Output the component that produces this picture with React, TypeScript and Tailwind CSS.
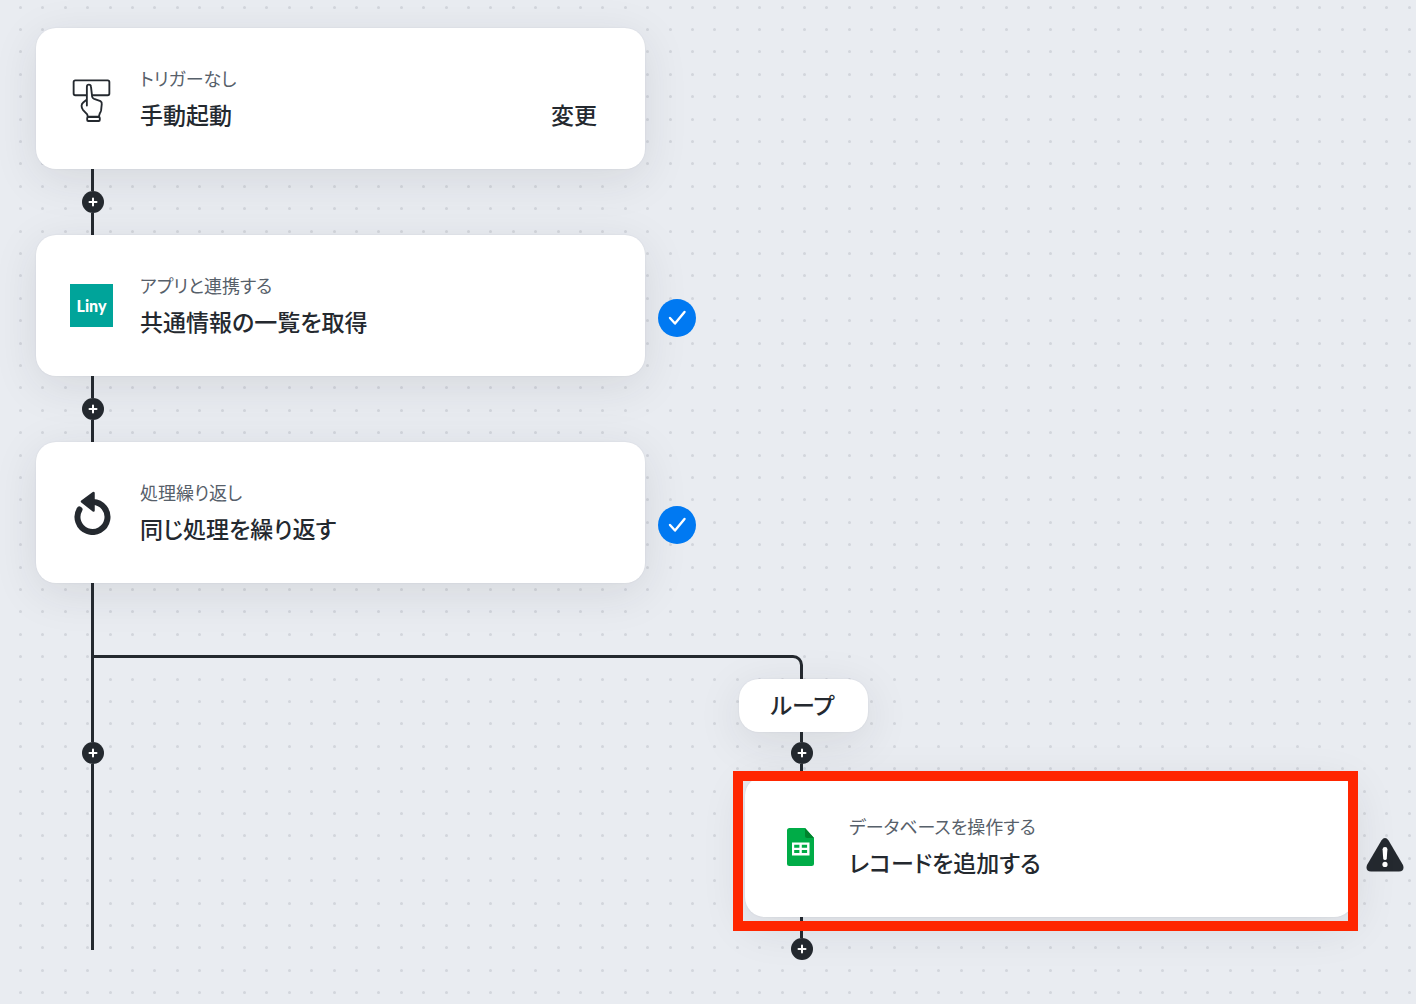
import type { ReactNode } from 'react';

type StepCardProps = {
  icon: ReactNode;
  category: string;
  title: string;
  action?: string;
};

function StepCard({ icon, category, title, action }: StepCardProps) {
  return (
    <article className="flex h-[141px] w-[609px] shrink-0 items-center rounded-[20px] bg-white pr-12 pl-8 shadow-[0_0_2px_rgba(36,41,47,0.08),0_10px_45px_rgba(36,41,47,0.1)]">
      <div className="flex w-[47px] shrink-0 justify-center">{icon}</div>
      <div className="ml-[25px] flex flex-1 flex-col gap-1 pb-0.5">
        <p className="text-[18px] leading-7 text-[#57606a]">{category}</p>
        <div className="flex justify-between text-[23px] leading-9 font-medium text-[#24292f]">
          <h2>{title}</h2>
          {action && (
            <button type="button" className="cursor-pointer">
              {action}
            </button>
          )}
        </div>
      </div>
    </article>
  );
}

function AddButton() {
  return (
    <button
      type="button"
      aria-label="ステップを追加"
      className="flex size-[22px] shrink-0 cursor-pointer items-center justify-center rounded-full bg-[#24292f]">
      <svg viewBox="0 0 10 10" className="size-[10px]" stroke="#fff" strokeWidth="2" strokeLinecap="round">
        <path d="M5 1.5v7M1.5 5h7" />
      </svg>
    </button>
  );
}

// Vertical line with an add button in the middle
function Connector() {
  return (
    <div className="flex h-[66px] w-[113px] flex-col items-center">
      <span className="w-[3px] flex-1 bg-[#24292f]" />
      <AddButton />
      <span className="w-[3px] flex-1 bg-[#24292f]" />
    </div>
  );
}

function DoneBadge() {
  return (
    <span role="img" aria-label="完了" className="mt-6 flex size-[38px] items-center justify-center rounded-full bg-[#0079f2]">
      <svg viewBox="0 0 20 16" className="h-4 w-5" fill="none" stroke="#fff" strokeWidth="2.4" strokeLinecap="round" strokeLinejoin="round">
        <path d="M3 8l5 5.5L17.5 2" />
      </svg>
    </span>
  );
}

function WarningIcon() {
  return (
    <svg role="img" aria-label="未設定" viewBox="0 0 38 36" className="mt-4 h-9 w-[38px]">
      <path d="M15.4 3.4Q19 -1.2 22.6 3.4L37 28Q39 34.4 33 34.6H5Q-1 34.4 1 28Z" fill="#24292f" />
      <path d="M16.6 12.2Q16.6 10 19 10t2.4 2.2l-.6 9.2Q20.6 23 19 23t-1.8-1.6z" fill="#fff" />
      <circle cx="19" cy="27.4" r="2.6" fill="#fff" />
    </svg>
  );
}

function PressIcon() {
  return (
    <svg viewBox="38 26 116 130" className="mt-1 h-[43px] w-[39px]" fill="none" stroke="#24292f" strokeWidth="5.6" strokeLinecap="round" strokeLinejoin="round">
      <rect x="42" y="30" width="108" height="45" rx="5" />
      <path
        d="M82 106V50Q82 43 88 43t6.5 7L98 80Q99 84 104 86L123 93Q128 96 127 102L125 121Q124 126 121 130L118 140H85L83 133L70 119Q66 114 66 107Q66 101 71 97L82 88"
        fill="#fff"
      />
      <rect x="83" y="141" width="38" height="12" rx="3" fill="#fff" />
    </svg>
  );
}

function RepeatIcon() {
  return (
    <svg viewBox="0 0 38 44" className="h-11 w-[38px]" fill="none" stroke="#24292f" strokeLinecap="round" strokeLinejoin="round">
      <path d="M6.5 18.5A15 15 0 1 0 20 11" strokeWidth="6" />
      <path d="M9 10.5L20.5 2V19.5Z" fill="#24292f" strokeWidth="2.5" />
    </svg>
  );
}

function LinyIcon() {
  return (
    <span className="flex size-[43px] items-center justify-center bg-[#00a49a] font-['Lato',sans-serif] text-base leading-none font-black text-white">
      Liny
    </span>
  );
}

function SheetIcon() {
  return (
    <svg viewBox="0 0 27 38" className="h-[38px] w-[27px]">
      <path d="M2.5 0H18l9 10v25.5A2.5 2.5 0 0 1 24.5 38h-22A2.5 2.5 0 0 1 0 35.5v-33A2.5 2.5 0 0 1 2.5 0z" fill="#00ac47" />
      <path d="M18 0l9 10h-7a2 2 0 0 1-2-2z" fill="#00832d" />
      <path
        d="M5 14.5h17.5v13H5zM7.2 16.8v2.9h5.2v-2.9zM14.8 16.8v2.9h5.3v-2.9zM7.2 22.1v3h5.2v-3zM14.8 22.1v3h5.3v-3z"
        fill="#fff"
        fillRule="evenodd"
      />
    </svg>
  );
}

const dotXs = [20, 42, 65, 87, 110];
const dotYs = [7, 29, 51, 74, 96];

function DotGrid() {
  return (
    <svg className="absolute inset-0 -z-10 size-full" aria-hidden="true">
      <pattern id="dots" width="112" height="112" patternUnits="userSpaceOnUse">
        {dotXs.map((x) => dotYs.map((y) => <circle key={`${x}-${y}`} cx={x + 0.5} cy={y + 0.5} r="1.5" fill="#d2d6dc" />))}
      </pattern>
      <rect width="100%" height="100%" fill="url(#dots)" />
    </svg>
  );
}

export default function App() {
  return (
    <main
      lang="ja"
      className="relative isolate min-h-screen overflow-hidden bg-[#e9ecf1] pt-7 pl-9 font-['Noto_Sans_CJK_JP',sans-serif] [font-feature-settings:'palt']">
      <DotGrid />

      <StepCard icon={<PressIcon />} category="トリガーなし" title="手動起動" action="変更" />
      <Connector />
      <div className="flex items-center gap-[13px]">
        <StepCard icon={<LinyIcon />} category="アプリと連携する" title="共通情報の一覧を取得" />
        <DoneBadge />
      </div>
      <Connector />
      <div className="flex items-center gap-[13px]">
        <StepCard icon={<RepeatIcon />} category="処理繰り返し" title="同じ処理を繰り返す" />
        <DoneBadge />
      </div>

      <div className="flex items-start">
        <div className="flex h-[367px] w-[58px] shrink-0 flex-col items-end">
          <span className="h-[159px] w-[3px] bg-[#24292f]" />
          <span className="-mr-[10px]">
            <AddButton />
          </span>
          <span className="w-[3px] flex-1 bg-[#24292f]" />
        </div>
        <div className="mt-[72px] h-6 w-[709px] shrink-0 rounded-tr-[10px] border-t-3 border-r-3 border-[#24292f]" />

        <section className="-ml-[58px] pt-24">
          <h3 className="-ml-[6px] flex h-[53px] w-[129px] items-center justify-center rounded-[20px] bg-white pr-0.5 pb-0.5 text-[23px] font-medium text-[#24292f] shadow-[0_0_2px_rgba(36,41,47,0.08),0_10px_45px_rgba(36,41,47,0.1)]">
            ループ
          </h3>
          <div className="flex w-[113px] flex-col items-center">
            <span className="h-[10px] w-[3px] bg-[#24292f]" />
            <AddButton />
            <span className="h-3 w-[3px] bg-[#24292f]" />
          </div>
          <div className="flex items-center gap-3">
            <div className="relative">
              <StepCard icon={<SheetIcon />} category="データベースを操作する" title="レコードを追加する" />
              <div className="absolute -top-[5px] -right-1 -bottom-[14px] -left-3 z-10 border-10 border-[#ff2600]" />
            </div>
            <WarningIcon />
          </div>
          <div className="flex w-[113px] flex-col items-center">
            <span className="h-[21px] w-[3px] bg-[#24292f]" />
            <AddButton />
          </div>
        </section>
      </div>
    </main>
  );
}
